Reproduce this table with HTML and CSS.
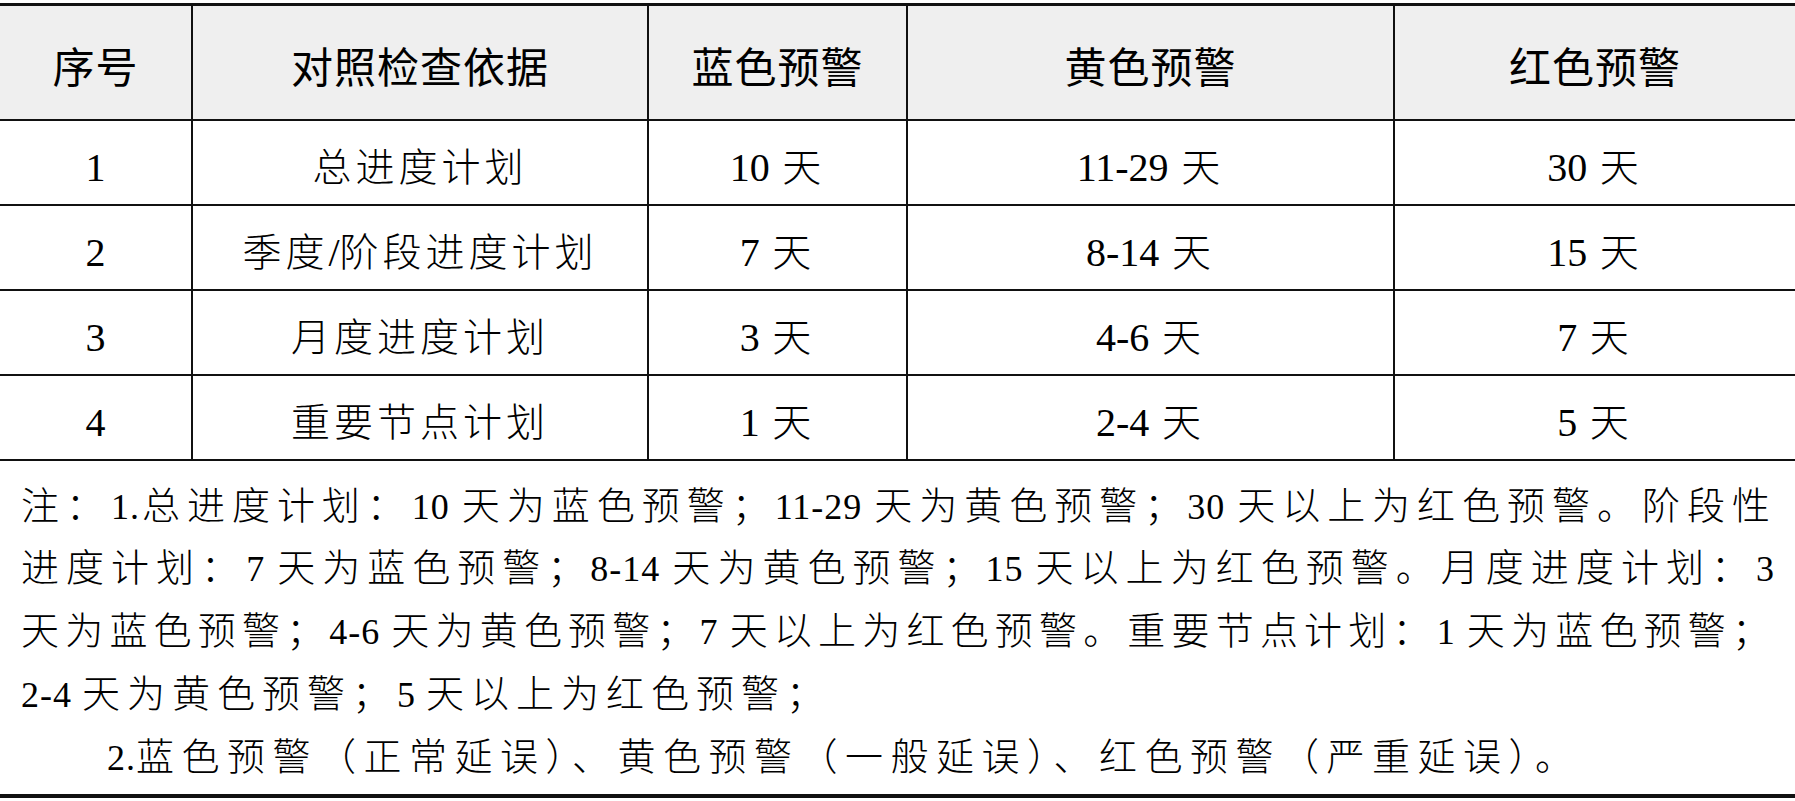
FILE: index.html
```html
<!DOCTYPE html>
<html lang="zh-CN">
<head>
<meta charset="utf-8">
<title>进度预警标准</title>
<link rel="stylesheet" href="styles.css">
</head>
<body>
<div class="sheet">
  <table class="grid">
    <colgroup>
      <col class="c1"><col class="c2"><col class="c3"><col class="c4"><col class="c5">
    </colgroup>
    <thead>
      <tr><th>序号</th><th>对照检查依据</th><th>蓝色预警</th><th>黄色预警</th><th>红色预警</th></tr>
    </thead>
    <tbody>
      <tr><td><span class="n">1</span></td><td>总进度计划</td><td><span class="n">10</span> 天</td><td><span class="n">11-29</span> 天</td><td><span class="n">30</span> 天</td></tr>
      <tr><td><span class="n">2</span></td><td>季度<span class="n">/</span>阶段进度计划</td><td><span class="n">7</span> 天</td><td><span class="n">8-14</span> 天</td><td><span class="n">15</span> 天</td></tr>
      <tr><td><span class="n">3</span></td><td>月度进度计划</td><td><span class="n">3</span> 天</td><td><span class="n">4-6</span> 天</td><td><span class="n">7</span> 天</td></tr>
      <tr><td><span class="n">4</span></td><td>重要节点计划</td><td><span class="n">1</span> 天</td><td><span class="n">2-4</span> 天</td><td><span class="n">5</span> 天</td></tr>
    </tbody>
  </table>
  <div class="note">
    <p class="line just">注：<span class="m">1.</span>总进度计划：<span class="m">10 </span>天为蓝色预警；<span class="m">11-29 </span>天为黄色预警；<span class="m">30 </span>天以上为红色预警。阶段性</p>
    <p class="line just">进度计划：<span class="m">7 </span>天为蓝色预警；<span class="m">8-14 </span>天为黄色预警；<span class="m">15 </span>天以上为红色预警。月度进度计划：<span class="m">3</span></p>
    <p class="line just">天为蓝色预警；<span class="m">4-6 </span>天为黄色预警；<span class="m">7 </span>天以上为红色预警。重要节点计划：<span class="m">1 </span>天为蓝色预警；</p>
    <p class="line wide"><span class="m">2-4 </span>天为黄色预警；<span class="m">5 </span>天以上为红色预警；</p>
    <p class="line indent"><span class="m">2.</span>蓝色预警（正常延误）、黄色预警（一般延误）、红色预警（严重延误）。</p>
  </div>
</div>
</body>
</html>
```

FILE: styles.css
```css
html, body {
  margin: 0;
  background: #ffffff;
}

body {
  font-family: "Noto Sans CJK SC", sans-serif;
  color: #000000;
}

.sheet {
  width: 1795px;
  padding-top: 3px;
}

.grid {
  width: 1795px;
  border-collapse: collapse;
  table-layout: fixed;
  border-top: 3px solid #111111;
}

.c1 { width: 192px; }
.c2 { width: 456px; }
.c3 { width: 259px; }
.c4 { width: 487px; }
.c5 { width: 401px; }

.grid th,
.grid td {
  border: 2px solid #111111;
  padding: 0;
  text-align: center;
  vertical-align: middle;
}

.grid th:first-child,
.grid td:first-child {
  border-left: none;
}

.grid th:last-child,
.grid td:last-child {
  border-right: none;
}

.grid thead tr {
  height: 115px;
  background: #efefef;
}

.grid th {
  font-size: 42px;
  font-weight: 400;
  letter-spacing: 1px;
  padding-top: 5px;
}

.grid tbody tr {
  height: 85px;
}

.grid td {
  font-size: 39px;
  font-weight: 300;
  letter-spacing: 4px;
  padding-top: 5px;
  line-height: 1.2;
}

.n {
  font-family: "Liberation Serif", serif;
  font-size: 40px;
  letter-spacing: 0;
  line-height: 1;
}

.note {
  border-bottom: 4px solid #111111;
  padding: 11px 20px 9px 21px;
  font-size: 38px;
  font-weight: 300;
  letter-spacing: 5px;
  line-height: 62.75px;
}

.line {
  margin: 0;
  white-space: nowrap;
}

.just {
  text-align: justify;
  text-align-last: justify;
}

.wide {
  letter-spacing: 7px;
}

.indent {
  text-indent: 86px;
  letter-spacing: 7.5px;
}

.m {
  font-family: "Liberation Serif", serif;
  font-size: 36px;
  letter-spacing: 1px;
  line-height: 1;
}
```
